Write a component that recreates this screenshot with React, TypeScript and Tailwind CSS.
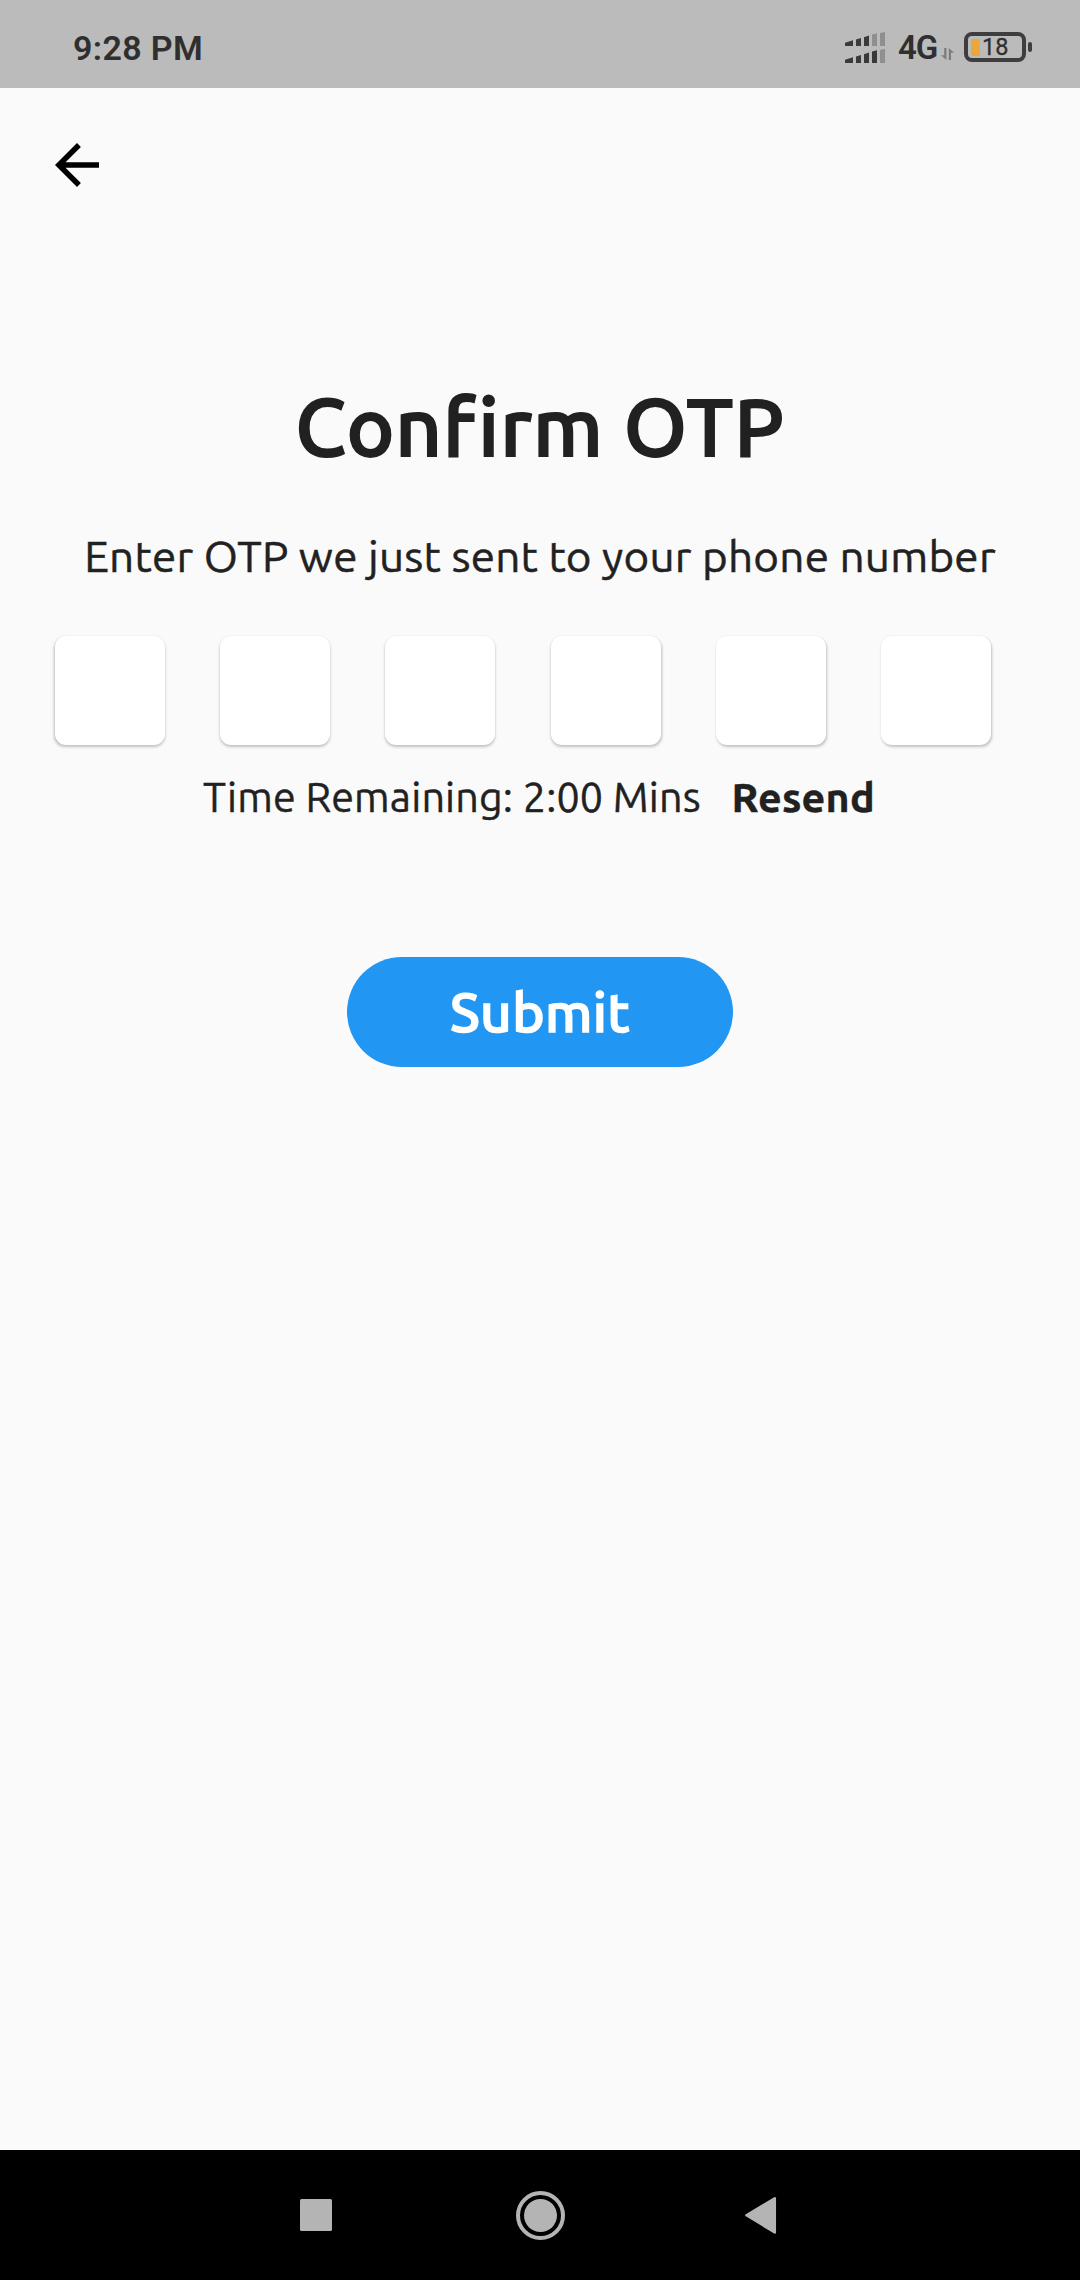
import React from "react";
import { MdArrowBack } from "react-icons/md";

function SignalIcon() {
  return (
    <svg className="h-[32px] w-[41px]" viewBox="0 0 41 32">
      <g fill="#3a3a3a">
        <path d="M0 10.7 L8 8.2 V14 H0Z M11 7.4 L16 6 V14 H11Z M19 5.2 L24 3.6 V14 H19Z" />
        <path d="M0 27.7 L8 25.2 V31 H0Z M11 24.4 L16 23 V31 H11Z M19 22.2 L24 20.6 V31 H19Z M27 19.6 L32 18.3 V31 H27Z" />
      </g>
      <g fill="#8f8f8f">
        <path d="M27 2.6 L32 1.2 V14 H27Z M35 1 L40 0 V14 H35Z" />
        <path d="M35 18 L40 16.8 V31 H35Z" />
      </g>
    </svg>
  );
}

function DataArrows() {
  return (
    <svg className="h-[12px] w-[14px]" viewBox="0 0 14 12" fill="#7c7c7c">
      <path d="M3.2 0 H5.4 V12 L0 7.2 H3.2Z" />
      <path d="M7.8 12 V0 L13 4.8 H10 V12Z" />
    </svg>
  );
}

function Battery() {
  return (
    <div className="flex items-center gap-[2px]">
      <div className="flex h-[30px] w-[62px] items-center rounded-[8px] border-[4px] border-[#3e3e3e] pl-[3px]">
        <span className="h-[17px] w-[9px] rounded-[2px] bg-[#eaa83c]" />
        <span className="ml-[2px] mt-[2px] text-[23.5px] leading-none text-[#2f2f2f] [-webkit-text-stroke:0.3px_#2f2f2f]">
          18
        </span>
      </div>
      <span className="h-[10px] w-[4px] rounded-[2px] bg-[#3e3e3e]" />
    </div>
  );
}

function StatusBar() {
  return (
    <header className="flex h-[88px] shrink-0 items-start bg-[#bbbbbb] font-[Roboto,sans-serif] text-[#2f2f2f]">
      <span className="ml-[73px] mt-[28px] text-[34px] leading-[40px] font-semibold tracking-[0.35px] whitespace-nowrap">
        9:28 PM
      </span>
      <div className="ml-auto mt-[32px]">
        <SignalIcon />
      </div>
      <span className="ml-[12px] mt-[28px] w-[39px] text-[33px] leading-[40px] font-semibold tracking-[-1px]">4G</span>
      <div className="ml-[4px] mt-[48px]">
        <DataArrows />
      </div>
      <div className="ml-[9px] mr-[48px] mt-[32px]">
        <Battery />
      </div>
    </header>
  );
}

function NavigationBar() {
  return (
    <footer className="flex h-[130px] shrink-0 items-center justify-center gap-[184px] bg-black pr-[4px]">
      <span className="h-[32px] w-[32px] rounded-[1.5px] bg-[#b4b4b4]" />
      <span className="flex h-[49px] w-[49px] items-center justify-center rounded-full border-[4px] border-[#b4b4b4]">
        <span className="h-[33px] w-[33px] rounded-full bg-[#b4b4b4]" />
      </span>
      <svg className="-ml-[4px] h-[38px] w-[32px]" viewBox="0 0 32 38">
        <path d="M1.4 19.3 L29.8 2.2 V36.4Z" fill="#b4b4b4" stroke="#b4b4b4" strokeWidth="2.5" strokeLinejoin="round" />
      </svg>
    </footer>
  );
}

const digitShadows = [
  "shadow-[-0.5px_2px_3px_rgba(0,0,0,0.22),0_0_2px_rgba(0,0,0,0.08)]",
  "shadow-[0_2px_3px_rgba(0,0,0,0.22),0_0_2px_rgba(0,0,0,0.08)]",
  "shadow-[0_2px_3px_rgba(0,0,0,0.22),0_0_2px_rgba(0,0,0,0.08)]",
  "shadow-[0.5px_2px_3px_rgba(0,0,0,0.22),0_0_2px_rgba(0,0,0,0.08)]",
  "shadow-[1px_2px_3px_rgba(0,0,0,0.22),0_0_2px_rgba(0,0,0,0.08)]",
  "shadow-[1px_2px_3px_rgba(0,0,0,0.22),0_0_2px_rgba(0,0,0,0.08)]",
];

export default function App() {
  return (
    <div className="flex h-[2280px] w-[1080px] flex-col bg-[#fafafa] font-[Ubuntu,'Noto_Sans',sans-serif] text-[#212121]">
      <StatusBar />
      <main className="flex flex-1 flex-col items-center">
        <button className="ml-[44px] mt-[44px] self-start" aria-label="Back">
          <MdArrowBack size={66} color="#000" />
        </button>
        <h1 className="mt-[178px] h-[100px] text-[81px] leading-[100px] font-medium tracking-[1px] whitespace-nowrap [-webkit-text-stroke:2px_#212121]">
          Confirm OTP
        </h1>
        <p className="mt-[52px] h-[56px] text-[44px] leading-[56px] tracking-[0.23px] whitespace-nowrap [-webkit-text-stroke:0.5px_#212121]">
          Enter OTP we just sent to your phone number
        </p>
        <div className="mt-[52px] ml-[55px] flex gap-[55.2px] self-start">
          {digitShadows.map((shadow, i) => (
            <div key={i} className={`h-[109px] w-[110px] rounded-[11px] bg-white ${shadow}`} />
          ))}
        </div>
        <div className="mt-[25px] ml-[203px] flex h-[54px] self-start text-[41.25px] leading-[54px] whitespace-nowrap [-webkit-text-stroke:0.4px_#212121]">
          <span className="w-[528.5px] tracking-[0.15px]">Time Remaining: 2:00 Mins</span>
          <span className="font-bold tracking-[0.2px]">Resend</span>
        </div>
        <button className="mt-[133px] h-[110px] w-[386px] rounded-full bg-[#2196f3] text-[55px] leading-[110px] font-medium tracking-[0.3px] text-white [-webkit-text-stroke:1.5px_#fff]">
          Submit
        </button>
      </main>
      <NavigationBar />
    </div>
  );
}
